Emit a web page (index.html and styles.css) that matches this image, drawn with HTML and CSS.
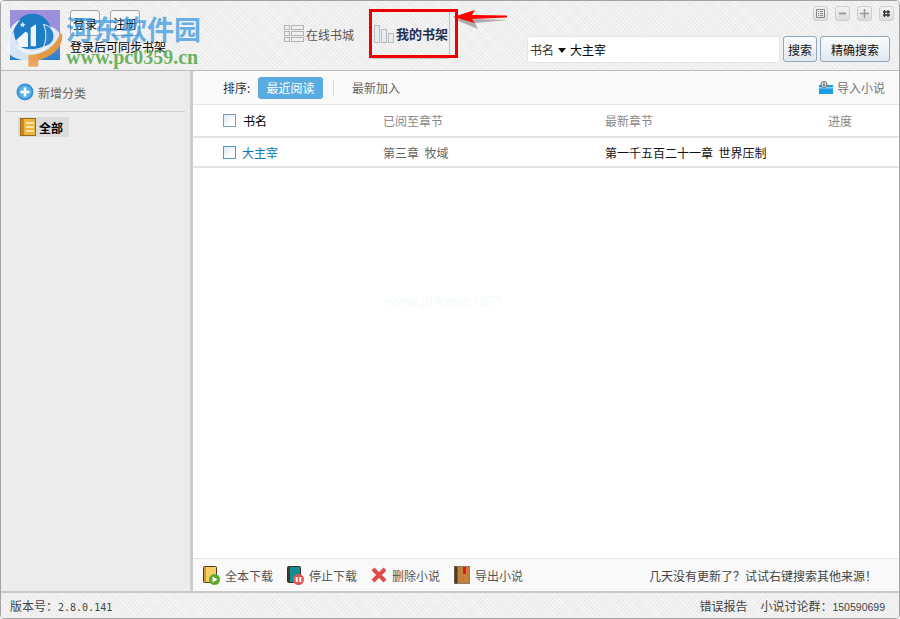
FILE: index.html
```html
<!DOCTYPE html>
<html lang="zh-CN">
<head>
  <meta charset="UTF-8">
  <title>我的书架</title>
  <link rel="stylesheet" href="styles.css">
</head>
<body>
  <div class="app">
    <header class="top">
      <div class="user">
        <div class="avatar"></div>
        <div class="user-info">
          <div class="user-btns">
            <button class="plain-btn">登录</button>
            <button class="plain-btn">注册</button>
          </div>
          <p class="user-tip">登录后可同步书架</p>
        </div>
      </div>

      <nav class="tabs">
        <a class="tab">
          <svg class="tab-icon" width="20" height="18" viewBox="0 0 20 18">
            <g fill="#f0f0f0" stroke="#b4b4b4">
              <rect x="0.5" y="0.5" width="5" height="4"/>
              <rect x="0.5" y="6.5" width="5" height="4"/>
              <rect x="0.5" y="12.5" width="5" height="4"/>
              <rect x="7.5" y="0.5" width="12" height="4"/>
              <rect x="7.5" y="6.5" width="12" height="4"/>
              <rect x="7.5" y="12.5" width="12" height="4"/>
            </g>
          </svg>
          在线书城
        </a>
        <a class="tab tab-active">
          <svg class="tab-icon" width="20" height="18" viewBox="0 0 20 18">
            <g fill="#e4edf0" stroke="#b8bcbc">
              <rect x="0.5" y="0.5" width="5" height="17"/>
              <rect x="7.5" y="4.5" width="5" height="13"/>
              <rect x="14.5" y="8.5" width="5" height="9"/>
            </g>
          </svg>
          我的书架
        </a>
      </nav>

      <div class="search">
        <div class="search-box">
          <span>书名</span><i class="caret"></i><span>大主宰</span>
        </div>
        <button class="search-btn">搜索</button>
        <button class="search-btn search-btn-wide">精确搜索</button>
      </div>

      <div class="win-btns">
        <span class="win-btn">
          <svg width="11" height="11" viewBox="0 0 11 11"><path d="M1.5 1.5h8v8h-8zM3 3.5h1M5 3.5h3M3 5.5h1M5 5.5h3M3 7.5h1M5 7.5h3" fill="none" stroke="#888"/></svg>
        </span>
        <span class="win-btn">
          <svg width="11" height="11" viewBox="0 0 11 11"><path d="M2 5.5h7" stroke="#999" stroke-width="2"/></svg>
        </span>
        <span class="win-btn">
          <svg width="11" height="11" viewBox="0 0 11 11"><path d="M1 5.5h9M5.5 1v9" stroke="#999" stroke-width="1.5"/></svg>
        </span>
        <span class="win-btn">
          <svg width="11" height="11" viewBox="0 0 11 11"><path d="M3.5 2v7M7 2v7M2 4h7M2 7h7" stroke="#333" stroke-width="1.3"/></svg>
        </span>
      </div>
    </header>

    <div class="middle">
      <aside class="side">
        <div class="side-add">
          <svg width="18" height="18" viewBox="0 0 18 18">
            <circle cx="9" cy="9" r="8.5" fill="#3b96d6"/>
            <circle cx="9" cy="9" r="6.5" fill="#5cb1e6"/>
            <path d="M9 4.5v9M4.5 9h9" stroke="#fff" stroke-width="2.6"/>
          </svg>
          新增分类
        </div>
        <div class="side-list">
          <div class="side-item">
            <svg width="16" height="18" viewBox="0 0 16 18">
              <rect x="0.5" y="0.5" width="15" height="17" fill="#eeb53e" stroke="#9a6a18"/>
              <path d="M1 1h3v16H1z" fill="#c98a20"/>
              <path d="M6 5h8M6 9h8M6 13h8" stroke="#fff3c8" stroke-width="1.5"/>
            </svg>
            全部
          </div>
        </div>
      </aside>

      <main class="content">
        <div class="sortbar">
          <span class="sort-label">排序:</span>
          <span class="pill">最近阅读</span>
          <span class="sort-sep"></span>
          <span class="sort-link">最新加入</span>
          <span class="import">
            <svg width="14" height="14" viewBox="0 0 14 14">
              <path d="M0 4h14v9H0z" fill="#1e9be6"/>
              <path d="M0 6h14v1.5H0z" fill="#8fd2f5"/>
              <circle cx="5" cy="3.5" r="3" fill="#eef6fa" stroke="#666"/>
              <path d="M5 1.5v3M3.7 3.5L5 5l1.3-1.5" fill="none" stroke="#555"/>
            </svg>
            导入小说
          </span>
        </div>

        <div class="row row-head">
          <span class="cell-name"><i class="check"></i><span class="head-name">书名</span></span>
          <span>已阅至章节</span>
          <span>最新章节</span>
          <span>进度</span>
        </div>
        <div class="row row-book">
          <span class="cell-name"><i class="check"></i><a class="book-link">大主宰</a></span>
          <span class="read-ch">第三章&nbsp;&nbsp;牧域</span>
          <span class="new-ch">第一千五百二十一章&nbsp;&nbsp;世界压制</span>
          <span></span>
        </div>

        <div class="list-space">
          <span class="faint">www.pHome.NET</span>
        </div>

        <div class="actions">
          <span class="action">
            <svg width="17" height="19" viewBox="0 0 17 19">
              <rect x="0.5" y="0.5" width="13" height="16" rx="1" fill="#f6cf62" stroke="#4a3a20"/>
              <path d="M1 1h2v15H1z" fill="#c9973a"/>
              <circle cx="11.5" cy="13.5" r="5.5" fill="#5fa82e"/>
              <path d="M9.5 10.5l5 3-5 3z" fill="#fff"/>
            </svg>
            全本下载
          </span>
          <span class="action">
            <svg width="17" height="19" viewBox="0 0 17 19">
              <rect x="0.5" y="0.5" width="13" height="16" rx="1" fill="#0f8f94" stroke="#3a3020"/>
              <path d="M1 1h2v15H1z" fill="#4a3a2a"/>
              <circle cx="11.5" cy="13.5" r="5.5" fill="#e25555"/>
              <path d="M9.7 11v5M13.3 11v5" stroke="#fff" stroke-width="2"/>
            </svg>
            停止下载
          </span>
          <span class="action">
            <svg width="16" height="16" viewBox="0 0 16 16">
              <path d="M2 2l12 12M14 2L2 14" stroke="#df4a4a" stroke-width="4"/>
            </svg>
            删除小说
          </span>
          <span class="action">
            <svg width="16" height="18" viewBox="0 0 16 18">
              <rect x="0.5" y="0.5" width="15" height="17" fill="#c2803a" stroke="#8a8070"/>
              <rect x="0.5" y="0.5" width="3" height="17" fill="#4a3a2a"/>
              <rect x="9" y="1" width="3" height="7" fill="#e01818"/>
            </svg>
            导出小说
          </span>
          <span class="action-tip">几天没有更新了？试试右键搜索其他来源！</span>
        </div>
      </main>
    </div>

    <footer class="status">
      <span class="version">版本号：<span class="ver-num">2.8.0.141</span></span>
      <span class="status-right">
        <span>错误报告</span>
        <span>小说讨论群：<span class="qq">150590699</span></span>
      </span>
    </footer>
  </div>

  <!-- watermark and annotation drawn over the screenshot -->
  <div class="wm">
    <svg class="wm-logo" width="70" height="65" viewBox="0 0 210 195">
      <ellipse cx="100" cy="112" rx="84" ry="52" transform="rotate(-12 100 112)" fill="#f2f6fa" opacity=".85"/>
      <path d="M186 88c6 40-36 76-92 82l-4-20c44-2 80-28 90-66z" fill="#e39a45"/>
      <rect x="85" y="150" width="30" height="35" fill="#e8a050" opacity=".9"/>
      <circle cx="98" cy="82" r="56" fill="#1e7cc4"/>
      <path d="M44 118c28 22 88 20 112-16-8 30-34 44-62 44-22 0-40-10-50-28z" fill="#f2f6fa" opacity=".8"/>
      <path d="M18 118C14 84 40 52 62 44 46 60 34 84 30 108z" fill="#e8eff6"/>
      <path d="M48 106l28-26 8 4v42H58z" fill="#eef4fa"/>
      <path d="M92 68l16-10v66H92z" fill="#eef4fa"/>
      <path d="M130 58c20 4 32 18 32 36 0 14-10 28-32 32 10-20 10-48 0-68z" fill="#2a83cc" stroke="#e8eff6" stroke-width="3"/>
      <path d="M68 50l3 6 6 1-5 4 1 6-5-3-5 3 1-6-5-4 6-1z" fill="#dcebf6"/>
    </svg>
    <span class="wm-cn">河东软件园</span>
    <span class="wm-url">www.pc0359.cn</span>
  </div>
  <div class="mark-box"></div>
  <svg class="mark-arrow" width="62" height="26" viewBox="0 0 62 26">
    <path d="M5 13l22-6-3 5 33 1-33 3 3 6z" fill="#000" opacity=".28" transform="translate(1 2)"/>
    <path d="M3 12L25 5l-3 5 35 .5v2L22 14l3 4z" fill="#f00"/>
  </svg>
</body>
</html>
```
FILE: styles.css
```css
* {
  box-sizing: border-box;
}

html, body {
  margin: 0;
  padding: 0;
}

body {
  width: 900px;
  height: 619px;
  overflow: hidden;
  position: relative;
  font-family: "Noto Sans CJK SC", "Liberation Sans", sans-serif;
  font-size: 12px;
  color: #555;
  background: #fff;
}

button {
  font-family: inherit;
  padding: 0;
}

.app {
  width: 900px;
  height: 619px;
  display: flex;
  flex-direction: column;
  border: 1px solid #a3a3a3;
  border-radius: 4px;
  overflow: hidden;
}

/* textured bars */
.top, .status {
  background-color: #efefef;
  background-image:
    repeating-linear-gradient(45deg, rgba(255,255,255,.45) 0 1px, transparent 1px 3px),
    repeating-linear-gradient(-45deg, rgba(0,0,0,.025) 0 1px, transparent 1px 3px);
}

.top {
  height: 70px;
  flex: none;
  display: flex;
  position: relative;
  border-bottom: 1px solid #bdbdbd;
}

.user {
  display: flex;
  width: 283px;
  padding: 9px 0 0 9px;
  gap: 10px;
}

.avatar {
  width: 50px;
  height: 50px;
  background: linear-gradient(#9c90dc 0, #9c90dc 40%, #2a7fd0 100%);
}

.user-btns {
  display: flex;
  gap: 10px;
}

.plain-btn {
  width: 30px;
  height: 26px;
  font-size: 12px;
  color: #000;
  background: #f7f7f7;
  border: 1px solid #9aa4ae;
  border-radius: 3px;
}

.user-tip {
  margin: 2px 0 0;
  color: #000;
  font-size: 12px;
  line-height: 18px;
}

.tabs {
  display: flex;
  width: 243px;
}

.tab {
  display: flex;
  align-items: center;
  gap: 2px;
  height: 50px;
  margin-top: 8px;
  font-size: 12px;
  color: #555;
}

.tab:first-child {
  width: 86px;
}

.tab-active {
  width: 80px;
  padding-left: 4px;
  font-weight: 700;
  font-size: 13px;
  color: #1f3050;
  border-right: 1px solid #c4c4c4;
  border-bottom: 1px solid #c4c4c4;
  border-radius: 0 0 3px 3px;
}

.search {
  display: flex;
  gap: 3px;
  margin-top: 35px;
  height: 27px;
}

.search-box {
  width: 253px;
  height: 27px;
  display: flex;
  align-items: center;
  padding-left: 2px;
  background: #fff;
  border: 1px solid #e4e4e4;
  border-radius: 3px;
  color: #333;
}

.caret {
  margin: 2px 4px 0 4px;
  border: 4px solid transparent;
  border-top: 5px solid #111;
  border-bottom: 0;
}

.search-box span:last-child {
  color: #000;
}

.search-btn {
  width: 34px;
  height: 26px;
  font-size: 12px;
  color: #111;
  background: linear-gradient(#fafcfd, #dfe8f0);
  border: 1px solid #92a8ba;
  border-radius: 3px;
}

.search-btn-wide {
  width: 70px;
}

.win-btns {
  position: absolute;
  top: 5px;
  right: 5px;
  display: flex;
  gap: 7px;
}

.win-btn {
  width: 15px;
  height: 15px;
  display: flex;
  align-items: center;
  justify-content: center;
  background: linear-gradient(#f4f4f4, #dcdcdc);
  border: 1px solid #cfcfcf;
  border-radius: 3px;
}

.middle {
  flex: 1;
  display: flex;
  min-height: 0;
}

.side {
  width: 192px;
  flex: none;
  padding: 0 5px;
  background: #ececec;
  border-right: 3px solid #cdcdcd;
}

.side-add {
  height: 41px;
  display: flex;
  align-items: center;
  gap: 4px;
  padding: 2px 0 0 10px;
  font-size: 12px;
  color: #666;
  border-bottom: 1px solid #cfcfcf;
}

.side-list {
  padding: 5px 0 0 12px;
}

.side-item {
  width: 51px;
  height: 20px;
  display: flex;
  align-items: center;
  gap: 3px;
  padding-left: 2px;
  background: #dcdcdc;
  font-weight: 700;
  font-size: 12px;
  color: #000;
}

.content {
  flex: 1;
  display: flex;
  flex-direction: column;
  min-width: 0;
  background: #fff;
}

.sortbar {
  height: 34px;
  flex: none;
  display: flex;
  align-items: center;
  padding-left: 30px;
  background: #f9f9f9;
  border-bottom: 1px solid #e4e4e4;
}

.sort-label {
  width: 35px;
  color: #333;
}

.pill {
  width: 65px;
  height: 22px;
  line-height: 22px;
  text-align: center;
  color: #fff;
  background: #5aabe0;
  border-radius: 3px;
}

.sort-sep {
  width: 1px;
  height: 14px;
  margin: 0 18px 0 10px;
  background: #d8d8d8;
}

.sort-link {
  color: #666;
}

.import {
  margin-left: auto;
  margin-right: 14px;
  display: flex;
  align-items: center;
  gap: 4px;
  color: #777;
}

.row {
  display: grid;
  grid-template-columns: 160px 222px 223px 1fr;
  align-items: center;
  padding-left: 30px;
  border-bottom: 2px solid #e4e4e4;
}

.row-head {
  height: 33px;
  color: #888;
}

.row-book {
  height: 30px;
  color: #666;
}

.cell-name {
  display: flex;
  align-items: center;
}

.check {
  width: 13px;
  height: 13px;
  background: linear-gradient(135deg, #dfe6f2, #fff 70%);
  border: 1px solid #4a9ad0;
}

.row-head .check {
  border-color: #7a9cb8;
  margin-right: 7px;
}

.row-book .check {
  margin-right: 6px;
}

.head-name {
  color: #000;
}

.book-link {
  color: #0a78b0;
}

.read-ch {
  color: #666;
}

.new-ch {
  color: #111;
}

.list-space {
  flex: 1;
  padding: 124px 0 0 192px;
}

.faint {
  font-family: "Liberation Sans", sans-serif;
  font-size: 15px;
  color: #f4fbfb;
}

.actions {
  height: 33px;
  flex: none;
  display: flex;
  align-items: center;
  gap: 14px;
  padding: 0 22px 0 10px;
  background: #f9f9f9;
  border-top: 1px solid #e4e4e4;
}

.action {
  display: flex;
  align-items: center;
  gap: 5px;
  color: #555;
}

.action-tip {
  margin-left: auto;
  color: #444;
}

.status {
  height: 27px;
  flex: none;
  display: flex;
  align-items: center;
  justify-content: space-between;
  padding: 0 14px 0 9px;
  border-top: 2px solid #c8c8c8;
  color: #444;
}

.ver-num {
  font-family: "DejaVu Sans Mono", monospace;
  font-size: 10px;
}

.status-right {
  display: flex;
  gap: 13px;
}

.qq {
  font-family: "Liberation Sans", sans-serif;
  font-size: 10.5px;
}

/* overlays */
.wm {
  position: absolute;
  left: 0;
  top: 0;
  width: 210px;
  height: 70px;
  pointer-events: none;
}

.wm-logo {
  position: absolute;
  left: 0;
  top: 5px;
}

.wm-cn {
  position: absolute;
  left: 66px;
  top: 11px;
  font-family: "Noto Sans CJK SC", sans-serif;
  font-size: 27px;
  line-height: 36px;
  font-weight: 700;
  color: rgba(50, 150, 225, .72);
  white-space: nowrap;
}

.wm-url {
  position: absolute;
  left: 66px;
  top: 46px;
  font-family: "Liberation Serif", serif;
  font-size: 20px;
  line-height: 22px;
  font-weight: 700;
  color: rgba(90, 170, 80, .9);
  white-space: nowrap;
}

.mark-box {
  position: absolute;
  left: 369px;
  top: 9px;
  width: 89px;
  height: 49px;
  border: 3px solid #ee0000;
}

.mark-arrow {
  position: absolute;
  left: 450px;
  top: 5px;
}
```
